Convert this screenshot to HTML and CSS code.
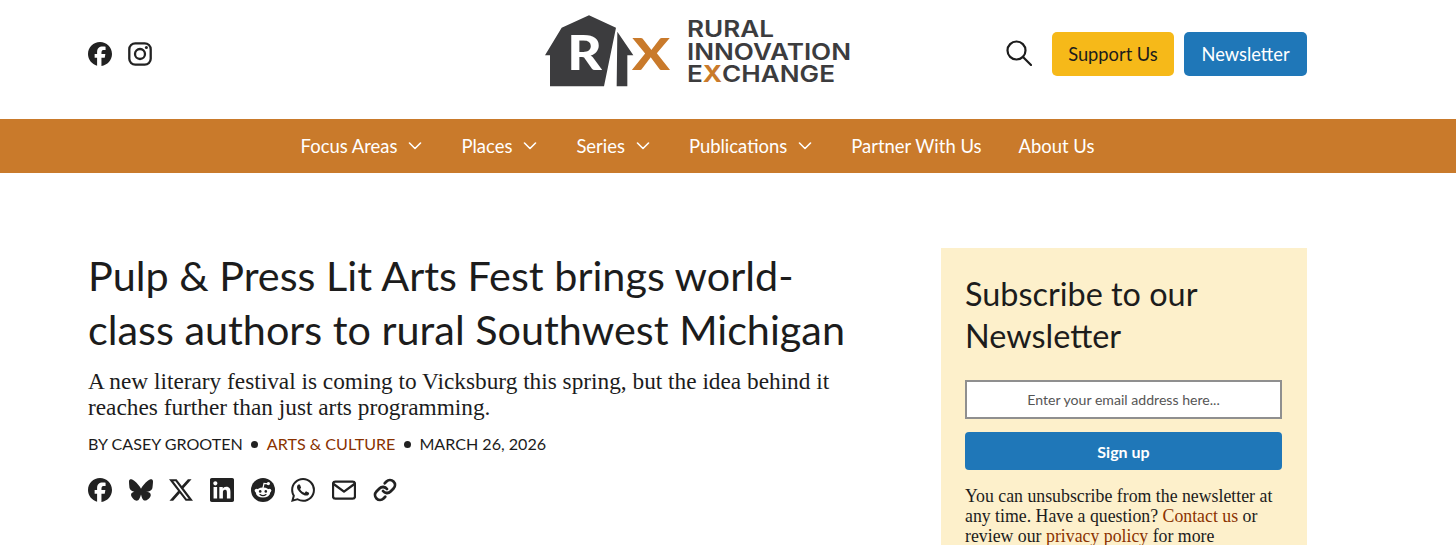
FILE: index.html
```html
<!DOCTYPE html>
<html lang="en">

<head>
    <meta charset="UTF-8">
    <meta name="viewport" content="width=device-width, initial-scale=1.0">
    <title>Rural Innovation Exchange</title>
    <link rel="stylesheet" href="styles.css">
</head>

<body>
    <div class="page">
        <header class="top">
            <div class="social">
                <a href="#" class="icon" aria-label="Facebook">
                    <svg viewBox="0 0 24 24"><path d="M9.101 23.691v-7.98H6.627v-3.667h2.474v-1.58c0-4.085 1.848-5.978 5.858-5.978.401 0 .955.042 1.468.103a8.68 8.68 0 0 1 1.141.195v3.325a8.623 8.623 0 0 0-.653-.036 26.805 26.805 0 0 0-.733-.009c-.707 0-1.259.096-1.675.309a1.686 1.686 0 0 0-.679.622c-.258.42-.374.995-.374 1.752v1.297h3.919l-.386 2.103-.287 1.564h-3.246v8.245C19.396 23.238 24 18.179 24 12.044c0-6.627-5.373-12-12-12s-12 5.373-12 12c0 5.628 3.874 10.35 9.101 11.647Z"/></svg>
                </a>
                <a href="#" class="icon" aria-label="Instagram">
                    <svg viewBox="0 0 24 24"><rect class="line" x="1.3" y="1.3" width="21.4" height="21.4" rx="6"/><circle class="line" cx="12" cy="12" r="5"/><circle cx="18.4" cy="5.6" r="1.5"/></svg>
                </a>
            </div>

            <a href="#" class="logo">
                <svg class="logo-mark" viewBox="45 47 375 215">
                    <path class="barn" d="M177 47 258 85 222 260H60V167H45L95 85Z"/>
                    <path class="barn" d="M262 97 310 167H292V260H260Z"/>
                    <text class="logo-r" x="112" y="212" textLength="104" lengthAdjust="spacingAndGlyphs">R</text>
                    <text class="logo-x" x="306" y="212" textLength="114" lengthAdjust="spacingAndGlyphs">X</text>
                </svg>
                <div class="logo-text">
                    <span>RURAL</span>
                    <span>INNOVATION</span>
                    <span>E<b>X</b>CHANGE</span>
                </div>
            </a>

            <div class="actions">
                <a href="#" class="search" aria-label="Search">
                    <svg viewBox="0 0 26 26"><circle cx="10.5" cy="10.5" r="9"/><path d="M17 17l8 8"/></svg>
                </a>
                <a href="#" class="btn btn-yellow">Support Us</a>
                <a href="#" class="btn btn-blue">Newsletter</a>
            </div>
        </header>

        <nav class="nav">
            <a href="#">Focus Areas <svg viewBox="0 0 14 8"><path d="M1.5 1l5.5 5.5L12.5 1"/></svg></a>
            <a href="#">Places <svg viewBox="0 0 14 8"><path d="M1.5 1l5.5 5.5L12.5 1"/></svg></a>
            <a href="#">Series <svg viewBox="0 0 14 8"><path d="M1.5 1l5.5 5.5L12.5 1"/></svg></a>
            <a href="#">Publications <svg viewBox="0 0 14 8"><path d="M1.5 1l5.5 5.5L12.5 1"/></svg></a>
            <a href="#">Partner With Us</a>
            <a href="#">About Us</a>
        </nav>

        <div class="content">
            <main class="article">
                <h1>Pulp &amp; Press Lit Arts Fest brings world-class authors to rural Southwest Michigan</h1>
                <p class="dek">A new literary festival is coming to Vicksburg this spring, but the idea behind it reaches further than just arts programming.</p>
                <div class="byline">
                    <span>By Casey Grooten</span>
                    <i></i>
                    <a href="#">Arts &amp; Culture</a>
                    <i></i>
                    <span>March 26, 2026</span>
                </div>
                <div class="share">
                    <a href="#" class="icon" aria-label="Facebook">
                        <svg viewBox="0 0 24 24"><path d="M9.101 23.691v-7.98H6.627v-3.667h2.474v-1.58c0-4.085 1.848-5.978 5.858-5.978.401 0 .955.042 1.468.103a8.68 8.68 0 0 1 1.141.195v3.325a8.623 8.623 0 0 0-.653-.036 26.805 26.805 0 0 0-.733-.009c-.707 0-1.259.096-1.675.309a1.686 1.686 0 0 0-.679.622c-.258.42-.374.995-.374 1.752v1.297h3.919l-.386 2.103-.287 1.564h-3.246v8.245C19.396 23.238 24 18.179 24 12.044c0-6.627-5.373-12-12-12s-12 5.373-12 12c0 5.628 3.874 10.35 9.101 11.647Z"/></svg>
                    </a>
                    <a href="#" class="icon" aria-label="Bluesky">
                        <svg viewBox="0 0 24 24"><path d="M12 10.8c-1.087-2.114-4.046-6.053-6.798-7.995C2.566.944 1.561 1.266.902 1.565.139 1.908 0 3.08 0 3.768c0 .69.378 5.65.624 6.479.815 2.736 3.713 3.66 6.383 3.364.136-.02.275-.039.415-.056-.138.022-.276.04-.415.056-3.912.58-7.387 2.005-2.83 7.078 5.013 5.19 6.87-1.113 7.823-4.308.953 3.195 2.05 9.271 7.733 4.308 4.267-4.308 1.172-6.498-2.74-7.078a8.741 8.741 0 0 1-.415-.056c.14.017.279.036.415.056 2.67.297 5.568-.628 6.383-3.364.246-.828.624-5.79.624-6.479 0-.688-.139-1.86-.902-2.203-.659-.299-1.664-.621-4.3 1.24C16.046 4.748 13.087 8.687 12 10.8Z"/></svg>
                    </a>
                    <a href="#" class="icon" aria-label="X">
                        <svg viewBox="0 0 24 24"><path d="M18.901 1.153h3.68l-8.04 9.19L24 22.846h-7.406l-5.8-7.584-6.638 7.584H.474l8.6-9.83L0 1.154h7.594l5.243 6.932ZM17.61 20.644h2.039L6.486 3.24H4.298Z"/></svg>
                    </a>
                    <a href="#" class="icon" aria-label="LinkedIn">
                        <svg viewBox="0 0 24 24"><path d="M20.447 20.452h-3.554v-5.569c0-1.328-.027-3.037-1.852-3.037-1.853 0-2.136 1.445-2.136 2.939v5.667H9.351V9h3.414v1.561h.046c.477-.9 1.637-1.85 3.37-1.85 3.601 0 4.267 2.37 4.267 5.455v6.286zM5.337 7.433c-1.144 0-2.063-.926-2.063-2.065 0-1.138.92-2.063 2.063-2.063 1.14 0 2.064.925 2.064 2.063 0 1.139-.925 2.065-2.064 2.065zm1.782 13.019H3.555V9h3.564v11.452zM22.225 0H1.771C.792 0 0 .774 0 1.729v20.542C0 23.227.792 24 1.771 24h20.451C23.2 24 24 23.227 24 22.271V1.729C24 .774 23.2 0 22.222 0h.003z"/></svg>
                    </a>
                    <a href="#" class="icon" aria-label="Reddit">
                        <svg viewBox="0 0 24 24">
                            <circle cx="12" cy="12" r="12"/>
                            <g class="alien">
                                <circle cx="5.6" cy="12.6" r="1.9"/>
                                <circle cx="18.4" cy="12.6" r="1.9"/>
                                <ellipse cx="12" cy="14.6" rx="7.2" ry="5"/>
                                <circle cx="17.4" cy="5.6" r="1.6"/>
                                <path class="antenna" d="M12 10l1-4.6 4 .4"/>
                            </g>
                            <circle cx="9.2" cy="13.4" r="1.3"/>
                            <circle cx="14.8" cy="13.4" r="1.3"/>
                            <path class="smile" d="M9 16.6c1.8 1.3 4.2 1.3 6 0"/>
                        </svg>
                    </a>
                    <a href="#" class="icon" aria-label="WhatsApp">
                        <svg viewBox="0 0 24 24"><path d="M17.472 14.382c-.297-.149-1.758-.867-2.03-.967-.273-.099-.471-.148-.67.15-.197.297-.767.966-.94 1.164-.173.199-.347.223-.644.075-.297-.15-1.255-.463-2.39-1.475-.883-.788-1.48-1.761-1.653-2.059-.173-.297-.018-.458.13-.606.134-.133.298-.347.446-.52.149-.174.198-.298.298-.497.099-.198.05-.371-.025-.52-.075-.149-.669-1.612-.916-2.207-.242-.579-.487-.5-.669-.51-.173-.008-.371-.01-.57-.01-.198 0-.52.074-.792.372-.272.297-1.04 1.016-1.04 2.479 0 1.462 1.065 2.875 1.213 3.074.149.198 2.096 3.2 5.077 4.487.709.306 1.262.489 1.694.625.712.227 1.36.195 1.871.118.571-.085 1.758-.719 2.006-1.413.248-.694.248-1.289.173-1.413-.074-.124-.272-.198-.57-.347m-5.421 7.403h-.004a9.87 9.87 0 01-5.031-1.378l-.361-.214-3.741.982.998-3.648-.235-.374a9.86 9.86 0 01-1.51-5.26c.001-5.45 4.436-9.884 9.888-9.884 2.64 0 5.122 1.03 6.988 2.898a9.825 9.825 0 012.893 6.994c-.003 5.45-4.437 9.884-9.885 9.884m8.413-18.297A11.815 11.815 0 0012.05 0C5.495 0 .16 5.335.157 11.892c0 2.096.547 4.142 1.588 5.945L.057 24l6.305-1.654a11.882 11.882 0 005.683 1.448h.005c6.554 0 11.89-5.335 11.893-11.893a11.821 11.821 0 00-3.48-8.413z"/></svg>
                    </a>
                    <a href="#" class="icon" aria-label="Email">
                        <svg viewBox="0 0 24 24"><rect class="line" x="1" y="3.6" width="22" height="17" rx="2.4"/><path class="line" d="M1.6 6l10.4 7.6L22.4 6"/></svg>
                    </a>
                    <a href="#" class="icon icon-link" aria-label="Copy link">
                        <svg viewBox="0 0 24 24"><path class="line" d="M10 13a5 5 0 0 0 7.54.54l3-3a5 5 0 0 0-7.07-7.07l-1.72 1.71"/><path class="line" d="M14 11a5 5 0 0 0-7.54-.54l-3 3a5 5 0 0 0 7.07 7.07l1.71-1.71"/></svg>
                    </a>
                </div>
            </main>

            <aside class="signup">
                <h2>Subscribe to our Newsletter</h2>
                <input class="email" type="text" placeholder="Enter your email address here...">
                <button class="submit">Sign up</button>
                <p>You can unsubscribe from the newsletter at any time. Have a question? <a href="#">Contact us</a> or review our <a href="#">privacy policy</a> for more information.</p>
            </aside>
        </div>
    </div>
</body>

</html>
```

FILE: styles.css
```css
* {
    box-sizing: border-box;
}

body {
    font-family: 'Lato', sans-serif;
    margin: 0;
    background-color: #fff;
    color: #1c1c1c;
}

a {
    color: inherit;
    text-decoration: none;
}

.page {
    height: 100vh;
    overflow: hidden;
}

.top {
    display: grid;
    grid-template-columns: 1fr auto 1fr;
    align-items: center;
    height: 119px;
    padding: 0 149px 11px 88px;
}

.social {
    display: flex;
    gap: 16px;
}

.icon {
    display: block;
    width: 24px;
    height: 24px;
}

.icon svg {
    display: block;
    width: 24px;
    height: 24px;
    fill: #222;
}

.icon svg .line {
    fill: none;
    stroke: #222;
    stroke-width: 2.3;
    stroke-linecap: round;
    stroke-linejoin: round;
}

.icon-link svg .line {
    stroke-width: 2.8;
}

.icon svg .alien {
    fill: #fff;
}

.icon svg .antenna,
.icon svg .smile {
    fill: none;
    stroke-width: 1.2;
    stroke-linecap: round;
}

.icon svg .antenna {
    stroke: #fff;
}

.icon svg .smile {
    stroke: #222;
}

.logo {
    display: flex;
    align-items: center;
    gap: 17px;
    margin-top: -6px;
}

.logo-mark {
    width: 125px;
    height: 72px;
}

.barn {
    fill: #3c3c3e;
}

.logo-r {
    font-family: 'Lato', sans-serif;
    font-weight: 900;
    font-size: 140px;
    fill: #fff;
}

.logo-x {
    font-family: 'Lato', sans-serif;
    font-weight: 900;
    font-size: 132px;
    fill: #c97a2b;
}

.logo-text {
    display: flex;
    flex-direction: column;
    width: 163px;
    margin-top: 2px;
    font-family: 'Inter', sans-serif;
    font-weight: 600;
    font-size: 22.5px;
    line-height: 22.5px;
    color: #3c3c3e;
}

.logo-text span {
    white-space: nowrap;
    transform: scaleX(1.16);
    transform-origin: left;
}

.logo-text b {
    font-weight: 700;
    color: #c97a2b;
}

.actions {
    display: flex;
    align-items: center;
    justify-content: flex-end;
    gap: 10px;
}

.search {
    width: 26px;
    height: 26px;
    margin-right: 10px;
    margin-top: -3px;
}

.search svg {
    display: block;
    fill: none;
    stroke: #1c1c1c;
    stroke-width: 2.2;
    stroke-linecap: round;
}

.btn {
    display: flex;
    align-items: center;
    justify-content: center;
    height: 44px;
    width: 122px;
    border-radius: 5px;
    font-size: 18.3px;
}

.btn-yellow {
    background-color: #f6b919;
}

.btn-blue {
    width: 123px;
    background-color: #1f77b8;
    color: #fff;
}

.nav {
    display: flex;
    justify-content: center;
    gap: 37px;
    height: 54px;
    align-items: center;
    background-color: #c97a2b;
    padding-right: 61px;
}

.nav a {
    display: flex;
    align-items: center;
    gap: 11px;
    color: #fff;
    font-size: 18.45px;
}

.nav svg {
    width: 14px;
    height: 8px;
    margin-right: 2px;
    fill: none;
    stroke: #fff;
    stroke-width: 1.6;
    stroke-linecap: round;
    stroke-linejoin: round;
}

.content {
    display: flex;
    justify-content: space-between;
    padding: 75px 149px 0 88px;
}

.article {
    width: 765px;
}

h1 {
    margin: 0;
    font-weight: 400;
    font-size: 41.35px;
    line-height: 54px;
}

.dek {
    margin: 12px 0 0;
    font-family: 'Liberation Serif', serif;
    font-size: 23.3px;
    line-height: 26px;
}

.byline {
    display: flex;
    align-items: center;
    gap: 8.5px;
    margin-top: 14px;
    font-size: 16.1px;
    line-height: 20px;
    text-transform: uppercase;
}

.byline i {
    width: 7px;
    height: 7px;
    border-radius: 50%;
    background-color: #222;
}

.byline a {
    color: #8a3200;
}

.share {
    display: flex;
    gap: 16.7px;
    margin-top: 24px;
}

.signup {
    width: 366px;
    padding: 25px 25px 24px 24px;
    background-color: #fdf0cb;
}

.signup h2 {
    margin: 0;
    font-weight: 400;
    font-size: 32.4px;
    line-height: 42px;
}

.email {
    display: block;
    width: 100%;
    height: 39px;
    margin-top: 23px;
    border: 2px solid #8f8f8f;
    background-color: #fff;
    font-family: 'Lato', sans-serif;
    font-size: 14.1px;
    text-align: center;
}

.email::placeholder {
    color: #555;
    opacity: 1;
}

.submit {
    display: block;
    width: 100%;
    height: 38px;
    margin-top: 13px;
    border: 0;
    border-radius: 4px;
    background-color: #1f77b8;
    color: #fff;
    font-family: 'Lato', sans-serif;
    font-weight: 700;
    font-size: 16px;
}

.signup p {
    margin: 16px 0 0;
    font-family: 'Liberation Serif', serif;
    font-size: 17.8px;
    line-height: 20px;
}

.signup p a {
    color: #8a3200;
}
```
